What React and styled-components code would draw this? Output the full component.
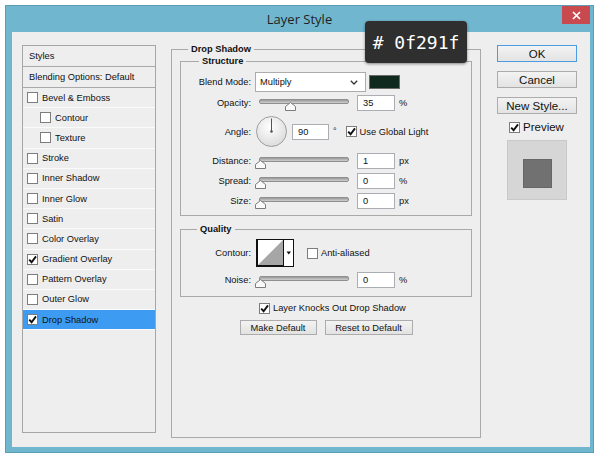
import React from "react";
import styled, { createGlobalStyle } from "styled-components";

const GlobalStyle = createGlobalStyle`
  body {
    margin: 0;
    background: #fff;
    font-family: "Liberation Sans", Arial, sans-serif;
    color: #111;
  }
`;

const styleItems = [
  { label: "Bevel & Emboss" },
  { label: "Contour", nested: true },
  { label: "Texture", nested: true },
  { label: "Stroke" },
  { label: "Inner Shadow" },
  { label: "Inner Glow" },
  { label: "Satin" },
  { label: "Color Overlay" },
  { label: "Gradient Overlay", checked: true },
  { label: "Pattern Overlay" },
  { label: "Outer Glow" },
  { label: "Drop Shadow", checked: true, active: true },
];

const Check = ({ checked }) => (
  <CheckBox>
    {checked && (
      <svg width="9" height="9" viewBox="0 0 9 9">
        <path d="M1.2 4.6 L3.6 7.2 L8 1.4" stroke="#111" strokeWidth="1.9" fill="none" />
      </svg>
    )}
  </CheckBox>
);

const Slider = ({ value }) => (
  <SliderBox>
    <Track />
    <Thumb style={{ left: 4 + 1 + value * 88 - 5.5 }}>
      <svg width="11" height="9" viewBox="0 0 11 9">
        <polygon points="0.5,8.5 0.5,4.5 5.5,0.5 10.5,4.5 10.5,8.5" fill="#fafafa" stroke="#7c7c7c" />
      </svg>
    </Thumb>
  </SliderBox>
);

const SliderRow = ({ label, value, text, unit, h }) => (
  <Row $h={h}>
    <Label>{label}</Label>
    <Slider value={value} />
    <Field>{text}</Field>
    <Unit>{unit}</Unit>
  </Row>
);

const App = () => {
  return (
    <>
      <GlobalStyle />
      <Window>
        <TitleBar>
          <Title>Layer Style</Title>
          <CloseButton>
            <svg width="9" height="9" viewBox="0 0 9 9">
              <path d="M1 1 L8 8 M8 1 L1 8" stroke="#fff" strokeWidth="1.7" />
            </svg>
          </CloseButton>
        </TitleBar>

        <Client>
          <StylesPanel>
            <HeaderRow>Styles</HeaderRow>
            <HeaderRow>Blending Options: Default</HeaderRow>
            {styleItems.map((item) => (
              <StyleItem key={item.label} $nested={item.nested} $active={item.active}>
                <Check checked={item.checked} />
                <span>{item.label}</span>
              </StyleItem>
            ))}
          </StylesPanel>

          <Group>
            <GroupTitle $ml={8}>Drop Shadow</GroupTitle>

            <SubGroup>
              <GroupTitle $ml={18}>Structure</GroupTitle>
              <Row $h={20}>
                <Label>Blend Mode:</Label>
                <Select>
                  <span>Multiply</span>
                  <svg width="8" height="5" viewBox="0 0 8 5">
                    <polyline points="0.8,0.8 4,4 7.2,0.8" stroke="#333" strokeWidth="1.3" fill="none" />
                  </svg>
                </Select>
                <Swatch />
              </Row>
              <SliderRow label="Opacity:" value={0.35} text="35" unit="%" h={21} />
              <Row $h={37}>
                <Label>Angle:</Label>
                <Dial>
                  <svg width="31" height="31" viewBox="0 0 31 31">
                    <defs>
                      <radialGradient id="dialFill" cx="45%" cy="35%" r="70%">
                        <stop offset="0" stopColor="#ffffff" />
                        <stop offset="1" stopColor="#d9d9d9" />
                      </radialGradient>
                    </defs>
                    <circle cx="15.5" cy="15.5" r="15" fill="url(#dialFill)" stroke="#9d9d9d" />
                    <line x1="15.5" y1="15.5" x2="15.5" y2="2.5" stroke="#555" strokeWidth="1" />
                    <circle cx="15.5" cy="15.5" r="1.3" fill="#555" />
                  </svg>
                </Dial>
                <Field $w={37} $ml={5}>90</Field>
                <Degree>°</Degree>
                <CheckLabel $ml={9}>
                  <Check checked />
                  <span>Use Global Light</span>
                </CheckLabel>
              </Row>
              <SliderRow label="Distance:" value={0} text="1" unit="px" h={21} />
              <SliderRow label="Spread:" value={0} text="0" unit="%" h={20} />
              <SliderRow label="Size:" value={0} text="0" unit="px" h={20} />
            </SubGroup>

            <SubGroup $mt={7} $pt={3}>
              <GroupTitle $ml={16}>Quality</GroupTitle>
              <Row $h={30}>
                <Label>Contour:</Label>
                <ContourPicker>
                  <svg width="38" height="28" viewBox="0 0 38 28">
                    <rect x="0" y="0" width="38" height="28" fill="#fff" />
                    <polygon points="2,26 27,1 27,26" fill="#a6a6a6" />
                    <rect x="0.5" y="0.5" width="37" height="27" fill="none" stroke="#111" />
                    <line x1="1.5" y1="0" x2="1.5" y2="28" stroke="#111" />
                    <line x1="0" y1="26.5" x2="28" y2="26.5" stroke="#111" />
                    <line x1="27.5" y1="0" x2="27.5" y2="28" stroke="#111" />
                    <polygon points="30.5,12.5 35,12.5 32.75,15.5" fill="#111" />
                  </svg>
                </ContourPicker>
                <CheckLabel $ml={13}>
                  <Check />
                  <span>Anti-aliased</span>
                </CheckLabel>
              </Row>
              <SliderRow label="Noise:" value={0} text="0" unit="%" h={24} />
            </SubGroup>

            <KnockRow>
              <CheckLabel>
                <Check checked />
                <span>Layer Knocks Out Drop Shadow</span>
              </CheckLabel>
            </KnockRow>

            <ButtonRow>
              <SmallButton $w={77}>Make Default</SmallButton>
              <SmallButton $w={88}>Reset to Default</SmallButton>
            </ButtonRow>
          </Group>

          <SideColumn>
            <SideButton $primary>OK</SideButton>
            <SideButton>Cancel</SideButton>
            <SideButton>New Style...</SideButton>
            <PreviewToggle>
              <Check checked />
              <span>Preview</span>
            </PreviewToggle>
            <PreviewBox>
              <PreviewSquare />
            </PreviewBox>
          </SideColumn>
        </Client>

        <Tooltip># 0f291f</Tooltip>
      </Window>
    </>
  );
};

export default App;

const Window = styled.div`
  position: relative;
  margin: 5px 0 0 5px;
  width: 589px;
  height: 448px;
  box-sizing: border-box;
  background: #71b6cf;
  border: 1px solid #5b9cb6;
  display: flex;
  flex-direction: column;
`;

const TitleBar = styled.div`
  height: 26px;
  display: grid;
  grid-template-columns: 1fr auto 1fr;
  flex-shrink: 0;
`;

const Title = styled.div`
  grid-column: 2;
  align-self: center;
  font-family: "Open Sans", "Noto Sans", sans-serif;
  font-size: 13px;
  color: #1f1f1f;
  margin-top: -1px;
`;

const CloseButton = styled.div`
  grid-column: 3;
  justify-self: end;
  align-self: start;
  width: 28px;
  height: 18px;
  margin-right: 3px;
  background: #c8494e;
  display: flex;
  align-items: center;
  justify-content: center;
`;

const Client = styled.div`
  flex: 1;
  margin: 0 3px 5px 6px;
  padding: 10px 0 0 10px;
  background: #eeeeee;
  display: flex;
  align-items: flex-start;
  font-size: 9.3px;
`;

const StylesPanel = styled.div`
  margin-top: 3px;
  width: 134px;
  height: 388px;
  box-sizing: border-box;
  border: 1px solid #a6a6a6;
  flex-shrink: 0;
`;

const HeaderRow = styled.div`
  height: 20px;
  line-height: 20px;
  padding-left: 6px;
  border-bottom: 1px solid #a9a9a9;
  white-space: nowrap;
`;

const StyleItem = styled.div`
  height: 19.2px;
  display: flex;
  align-items: center;
  gap: 4px;
  padding-left: ${(p) => (p.$nested ? "17px" : "4px")};
  border-bottom: 1px solid #fbfbfb;
  background: ${(p) => (p.$active ? "#3d9cf1" : "transparent")};
  white-space: nowrap;
`;

const CheckBox = styled.div`
  width: 11px;
  height: 11px;
  box-sizing: border-box;
  border: 1px solid #7d7d7d;
  background: #fff;
  display: flex;
  align-items: center;
  justify-content: center;
  flex-shrink: 0;
`;

const Group = styled.fieldset`
  margin: 1px 0 0 15px;
  padding: 0 8px;
  width: 310px;
  height: 395px;
  box-sizing: border-box;
  border: 1px solid #a9a9a9;
  min-width: 0;
  flex-shrink: 0;
`;

const GroupTitle = styled.legend`
  margin-left: ${(p) => p.$ml}px;
  padding: 0 3px;
  font-weight: bold;
  line-height: 12px;
  font-size: 9.3px;
`;

const SubGroup = styled.fieldset`
  margin: ${(p) => p.$mt || 0}px 0 0 0;
  padding: ${(p) => (p.$pt !== undefined ? p.$pt : 5)}px 0 4px 0;
  border: 1px solid #a9a9a9;
  min-width: 0;
`;

const Row = styled.div`
  height: ${(p) => p.$h}px;
  display: flex;
  align-items: center;
`;

const Label = styled.span`
  width: 70px;
  text-align: right;
  flex-shrink: 0;
  white-space: nowrap;
`;

const Select = styled.div`
  margin-left: 4px;
  width: 111px;
  height: 20px;
  box-sizing: border-box;
  border: 1px solid #acacac;
  background: #fff;
  display: flex;
  align-items: center;
  justify-content: space-between;
  padding: 0 7px 0 4px;
`;

const Swatch = styled.div`
  margin-left: 3px;
  width: 31px;
  height: 14px;
  box-sizing: border-box;
  background: #0f291f;
  border: 1px solid #6a6a6a;
`;

const SliderBox = styled.div`
  position: relative;
  margin-left: 4px;
  width: 98px;
  height: 14px;
  flex-shrink: 0;
`;

const Track = styled.div`
  position: absolute;
  left: 4px;
  top: 3px;
  width: 90px;
  height: 5px;
  box-sizing: border-box;
  border: 1px solid #8f8f8f;
  border-radius: 2px;
  background: linear-gradient(#9a9a9a, #cfcfcf);
`;

const Thumb = styled.div`
  position: absolute;
  top: 6px;
  width: 11px;
  height: 9px;
  line-height: 0;
`;

const Field = styled.div`
  margin-left: ${(p) => (p.$ml !== undefined ? p.$ml : 4)}px;
  width: ${(p) => p.$w || 38}px;
  height: 16px;
  box-sizing: border-box;
  border: 1px solid #abadb3;
  background: #fff;
  padding-left: 5px;
  line-height: 14px;
  flex-shrink: 0;
`;

const Unit = styled.span`
  margin-left: 4px;
`;

const Dial = styled.div`
  margin-left: 5px;
  width: 31px;
  height: 31px;
  line-height: 0;
`;

const Degree = styled.span`
  margin-left: 4px;
  align-self: flex-start;
  margin-top: 13px;
  font-size: 9px;
`;

const CheckLabel = styled.label`
  margin-left: ${(p) => p.$ml || 0}px;
  display: flex;
  align-items: center;
  gap: 3px;
  white-space: nowrap;
`;

const ContourPicker = styled.div`
  margin-left: 5px;
  width: 38px;
  height: 28px;
  line-height: 0;
`;

const KnockRow = styled.div`
  height: 16px;
  margin-top: 3px;
  padding-left: 79px;
  display: flex;
  align-items: center;
`;

const ButtonRow = styled.div`
  margin-top: 4px;
  display: flex;
  justify-content: center;
  gap: 8px;
`;

const SmallButton = styled.button`
  width: ${(p) => p.$w}px;
  height: 15px;
  padding: 0;
  box-sizing: border-box;
  border: 1px solid #acacac;
  background: linear-gradient(#f3f3f3, #e2e2e2);
  font-family: inherit;
  font-size: 9.3px;
  color: #111;
`;

const SideColumn = styled.div`
  margin: 3px 0 0 16px;
  width: 80px;
  display: flex;
  flex-direction: column;
  flex-shrink: 0;
`;

const SideButton = styled.button`
  height: 17px;
  margin-bottom: 9px;
  padding: 0;
  box-sizing: border-box;
  border: 1px solid ${(p) => (p.$primary ? "#4b9be2" : "#acacac")};
  background: linear-gradient(#f3f3f3, #e3e3e3);
  font-family: inherit;
  font-size: 11.5px;
  color: #111;
`;

const PreviewToggle = styled.label`
  margin: -2px 0 0 12px;
  height: 12px;
  display: flex;
  align-items: center;
  gap: 3px;
  font-size: 11.5px;
`;

const PreviewBox = styled.div`
  margin: 7px 0 0 10px;
  width: 60px;
  height: 60px;
  box-sizing: border-box;
  border: 1px solid #c9c9c9;
  background: #d6d6d6;
  display: flex;
  align-items: center;
  justify-content: center;
  padding-top: 6px;
`;

const PreviewSquare = styled.div`
  width: 29px;
  height: 29px;
  box-sizing: border-box;
  background: #717171;
  border: 1px solid #666;
`;

const Tooltip = styled.div`
  position: absolute;
  left: 359px;
  top: 15px;
  width: 102px;
  height: 42px;
  border-radius: 4px;
  background: #2f2f2f;
  box-shadow: 0 1px 3px rgba(0, 0, 0, 0.45);
  color: #fff;
  font-family: "DejaVu Sans Mono", "Liberation Mono", monospace;
  font-size: 18px;
  display: flex;
  align-items: center;
  justify-content: center;
  padding-top: 1px;
  box-sizing: border-box;
`;
